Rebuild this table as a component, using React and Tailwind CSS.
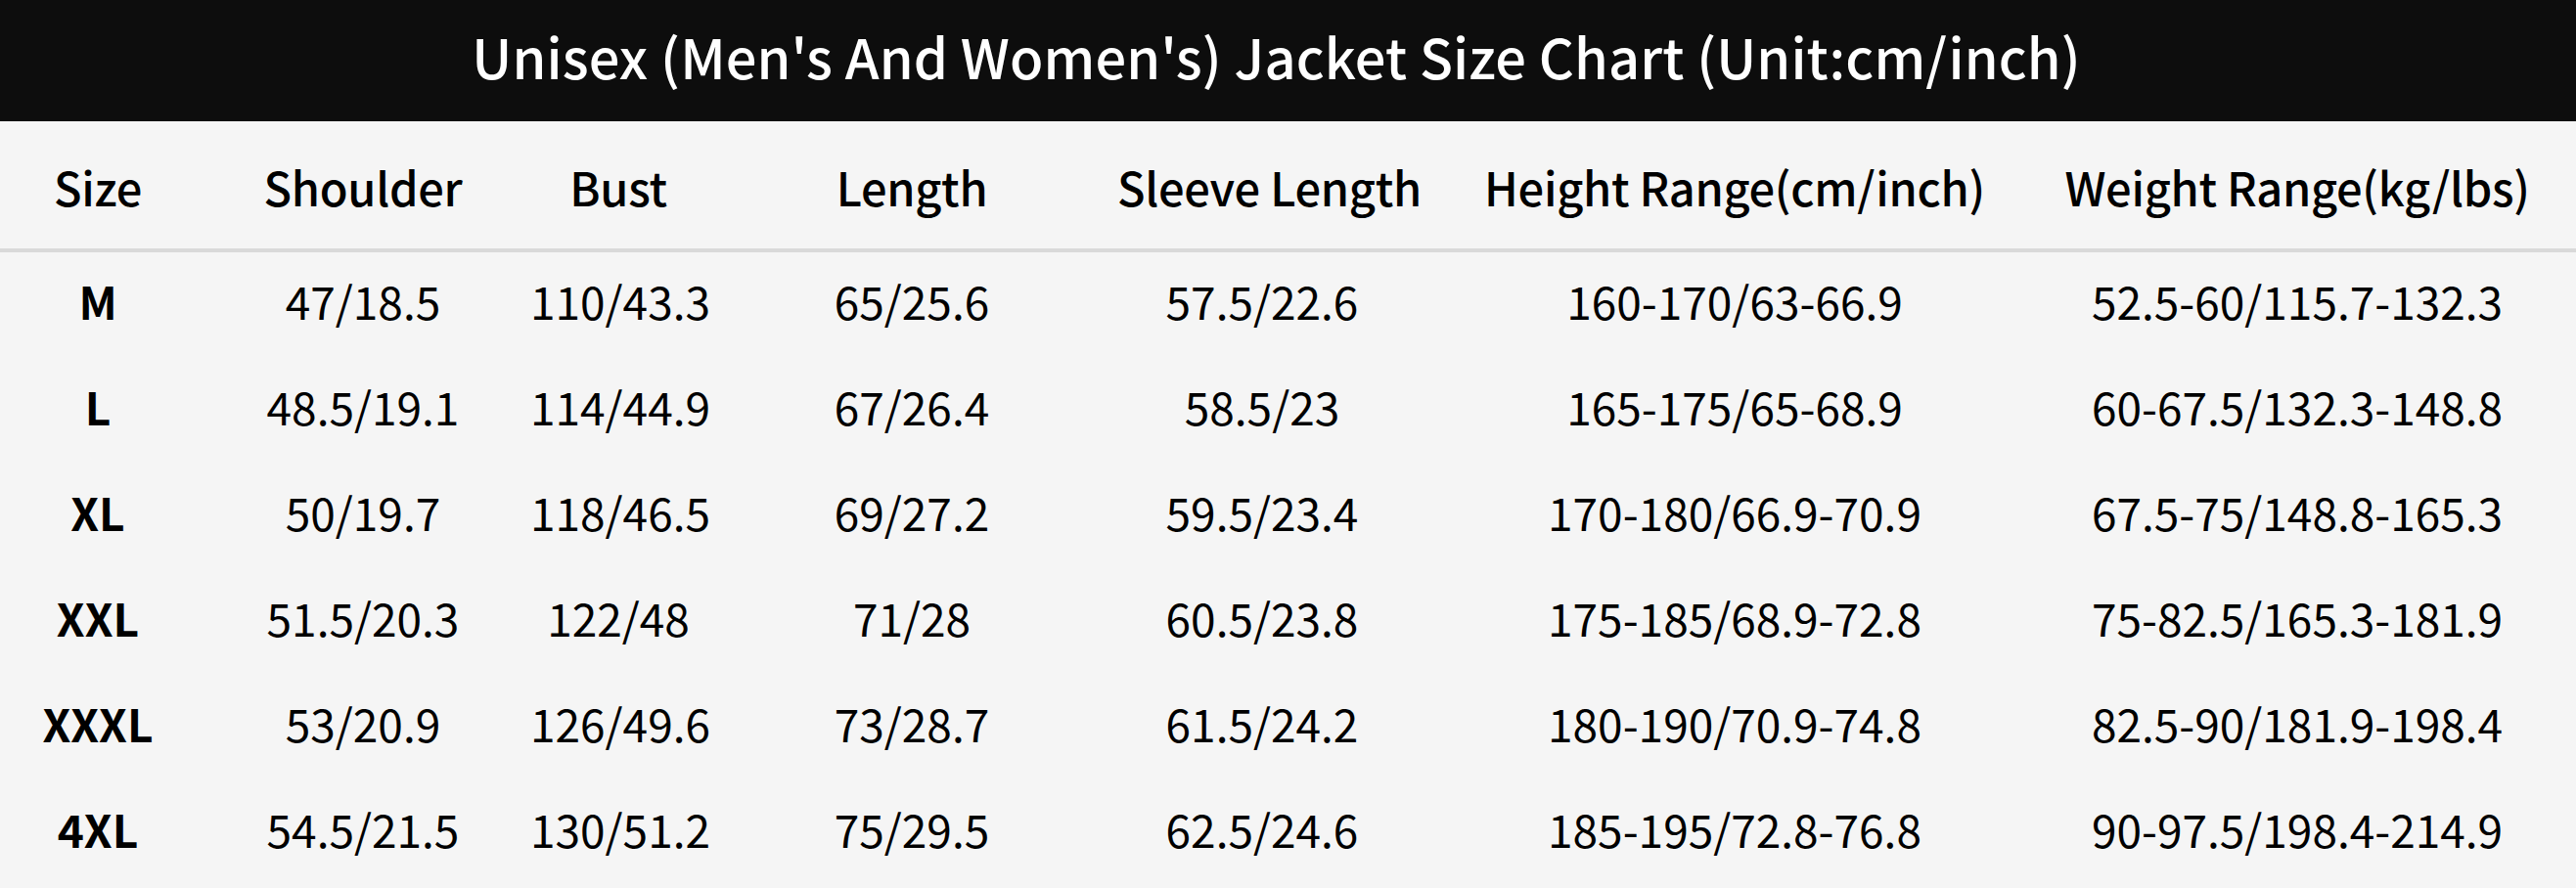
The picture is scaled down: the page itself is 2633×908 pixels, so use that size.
export default function App() {
  const headers = ["Size", "Shoulder", "Bust", "Length", "Sleeve Length", "Height Range(cm/inch)", "Weight Range(kg/lbs)"];
  const rows = [
    ["M", "47/18.5", "110/43.3", "65/25.6", "57.5/22.6", "160-170/63-66.9", "52.5-60/115.7-132.3"],
    ["L", "48.5/19.1", "114/44.9", "67/26.4", "58.5/23", "165-175/65-68.9", "60-67.5/132.3-148.8"],
    ["XL", "50/19.7", "118/46.5", "69/27.2", "59.5/23.4", "170-180/66.9-70.9", "67.5-75/148.8-165.3"],
    ["XXL", "51.5/20.3", "122/48", "71/28", "60.5/23.8", "175-185/68.9-72.8", "75-82.5/165.3-181.9"],
    ["XXXL", "53/20.9", "126/49.6", "73/28.7", "61.5/24.2", "180-190/70.9-74.8", "82.5-90/181.9-198.4"],
    ["4XL", "54.5/21.5", "130/51.2", "75/29.5", "62.5/24.6", "185-195/72.8-76.8", "90-97.5/198.4-214.9"],
  ];
  const grid = "grid grid-cols-[200px_342px_180px_420px_296px_670px_480px]";
  return (
    <div className="w-[2633px] h-[908px] bg-[#f5f5f5] text-black overflow-hidden" style={{ fontFamily: '"Noto Sans CJK SC", "Noto Sans", sans-serif' }}>
      <div className="h-[124px] bg-[#0d0d0d] flex items-center justify-center pb-[10px] pr-[24px]">
        <h1 className="text-white text-[56px] font-medium leading-none tracking-[0.1px]">Unisex (Men's And Women's) Jacket Size Chart (Unit:cm/inch)</h1>
      </div>
      <div className={`${grid} h-[134px] border-b-4 border-[#d9d9d9] items-center`}>
        {headers.map((h) => (
          <div key={h} className="text-center text-[47px] font-medium leading-none whitespace-nowrap pt-[2px] tracking-[-0.3px]">{h}</div>
        ))}
      </div>
      {rows.map((r) => (
        <div key={r[0]} className={`${grid} h-[108px] items-center pb-[10px]`}>
          {r.map((c, i) => (
            <div key={i} className={`text-center text-[46px] leading-none whitespace-nowrap ${i === 0 ? "font-bold" : "font-normal"}`}>{c}</div>
          ))}
        </div>
      ))}
    </div>
  );
}
